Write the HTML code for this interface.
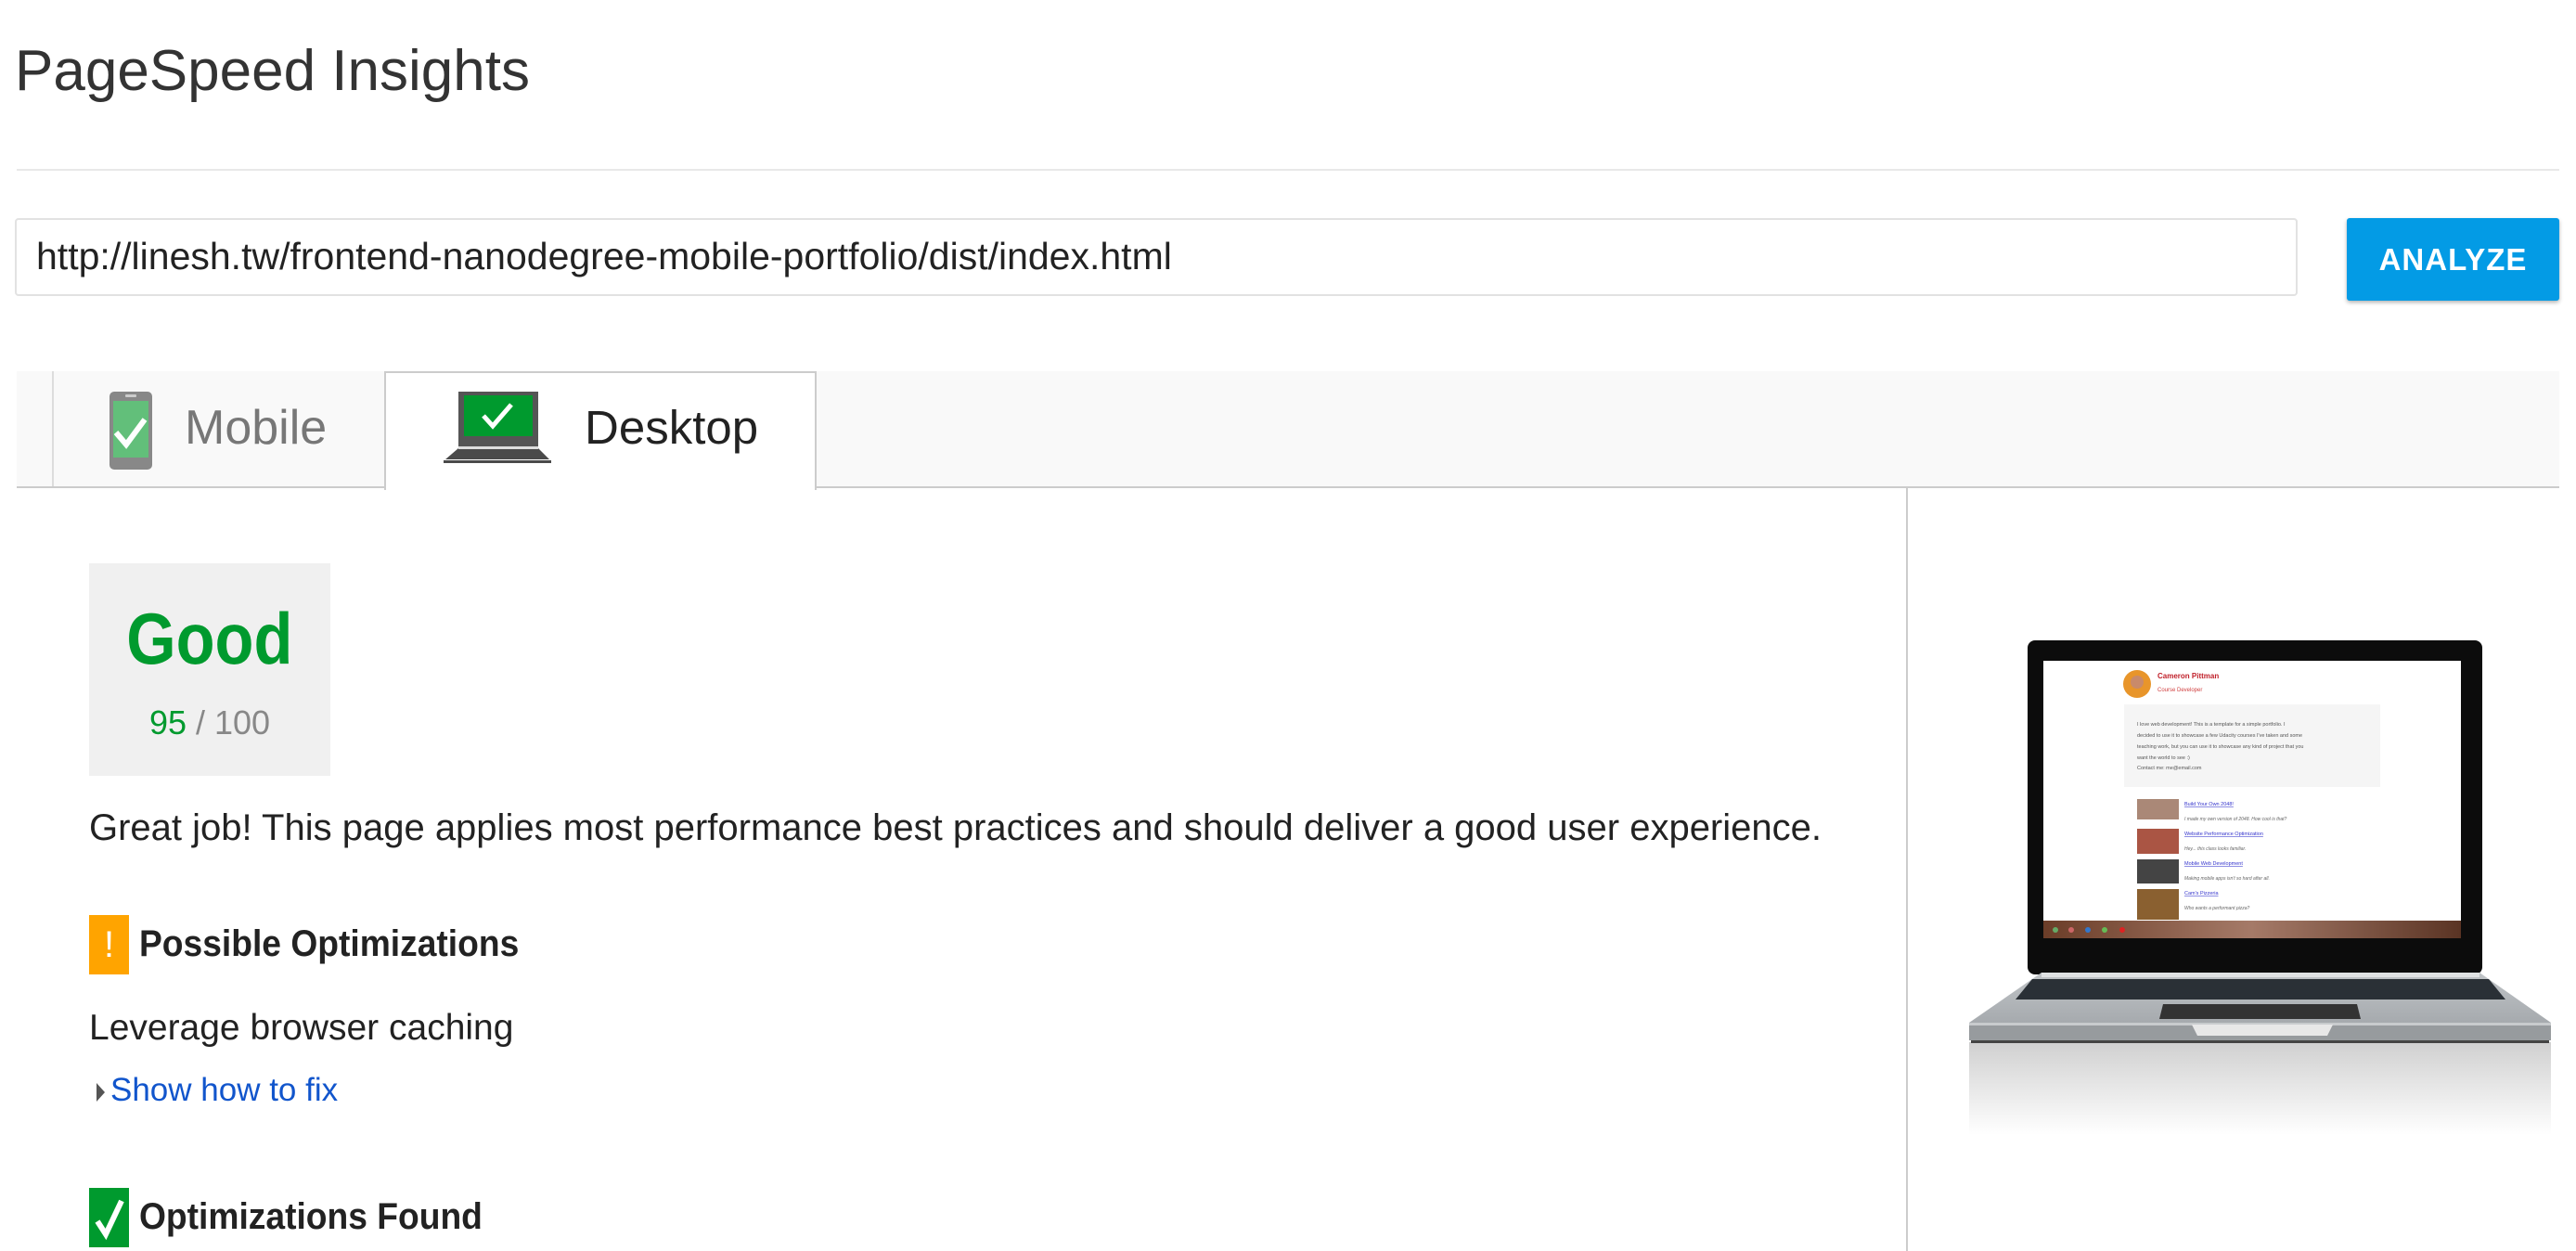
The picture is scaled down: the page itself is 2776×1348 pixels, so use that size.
<!DOCTYPE html>
<html><head><meta charset="utf-8">
<style>
html,body{margin:0;padding:0;background:#fff;}
body{width:2776px;height:1348px;position:relative;overflow:hidden;font-family:"Liberation Sans",Arial,sans-serif;color:#222;}
.a{position:absolute;white-space:nowrap;}
</style></head><body>
<div class="a" style="left:16px;top:37px;font-size:62px;color:#333;line-height:80px;">PageSpeed Insights</div>
<div class="a" style="left:18px;top:182px;width:2740px;height:2px;background:#e8e8e8;"></div>

<div class="a" style="left:16px;top:235px;width:2456px;height:80px;border:2px solid #e2e2e2;border-radius:4px;"></div>
<div class="a" style="left:39px;top:252px;font-size:41px;line-height:48px;color:#222;">http://linesh.tw/frontend-nanodegree-mobile-portfolio/dist/index.html</div>

<div class="a" style="left:2529px;top:235px;width:229px;height:89px;background:#039be5;border-radius:3px;box-shadow:0 2px 4px rgba(0,0,0,.3);color:#fff;font-size:33px;font-weight:bold;line-height:89px;text-align:center;letter-spacing:1px;">ANALYZE</div>

<div class="a" style="left:18px;top:400px;width:2740px;height:124px;background:#f9f9f9;border-bottom:2px solid #ccc;"></div>
<div class="a" style="left:56px;top:400px;width:2px;height:124px;background:#ddd;"></div>
<svg class="a" style="left:116px;top:420px" width="50" height="88" viewBox="0 0 50 88">
<rect x="2" y="2" width="46" height="84" rx="5" fill="#888"/>
<rect x="6" y="12" width="38" height="61" fill="#62bf7a"/>
<rect x="19" y="5" width="12" height="3" rx="1" fill="#ccc"/>
<path d="M9 46 L20 59 L40 32" stroke="#fff" stroke-width="6" fill="none"/>
</svg>
<div class="a" style="left:199px;top:430px;font-size:52px;line-height:62px;color:#777;">Mobile</div>

<div class="a" style="left:414px;top:400px;width:466px;height:128px;background:#fff;border:2px solid #ccc;border-bottom:none;box-sizing:border-box;"></div>
<svg class="a" style="left:478px;top:420px" width="116" height="82" viewBox="0 0 116 82">
<rect x="16" y="2" width="86" height="64" fill="#555"/>
<rect x="22" y="6" width="74" height="44" fill="#009a2e"/>
<path d="M43 28 L53 39 L73 16" stroke="#fff" stroke-width="5" fill="none"/>
<path d="M16 63 L102 63 L114 75 L2 75 Z" fill="#4a4a4a"/>
<rect x="16" y="61" width="86" height="3" fill="#ddd"/>
<rect x="0" y="76" width="116" height="3" fill="#4a4a4a"/>
</svg>
<div class="a" style="left:630px;top:430px;font-size:51px;line-height:62px;color:#222;">Desktop</div>

<div class="a" style="left:2054px;top:526px;width:2px;height:822px;background:#ccc;"></div>

<div class="a" style="left:96px;top:607px;width:260px;height:229px;background:#f0f0f0;"></div>
<div class="a" style="left:96px;top:640px;width:260px;text-align:center;font-size:78px;line-height:96px;font-weight:bold;color:#009a2e;"><span style="display:inline-block;transform:scaleX(0.88);">Good</span></div>
<div class="a" style="left:96px;top:757px;width:260px;text-align:center;font-size:36px;line-height:44px;color:#888;"><span style="color:#009a2e">95</span> / 100</div>

<div class="a" style="left:96px;top:867px;font-size:40px;line-height:50px;color:#222;">Great job! This page applies most performance best practices and should deliver a good user experience.</div>

<div class="a" style="left:96px;top:986px;width:43px;height:64px;background:#ffa400;color:#fff;font-size:40px;line-height:64px;text-align:center;">!</div>
<div class="a" style="left:150px;top:992px;font-size:40px;line-height:50px;font-weight:bold;color:#222;"><span style="display:inline-block;transform:scaleX(0.93);transform-origin:left;">Possible Optimizations</span></div>

<div class="a" style="left:96px;top:1083px;font-size:39px;line-height:50px;color:#222;">Leverage browser caching</div>
<svg class="a" style="left:103px;top:1166px" width="12" height="22"><path d="M1 1 L10 11 L1 21Z" fill="#555"/></svg>
<div class="a" style="left:119px;top:1152px;font-size:35px;line-height:46px;color:#15c;">Show how to fix</div>

<div class="a" style="left:96px;top:1280px;width:43px;height:64px;background:#009a2e;"></div>
<svg class="a" style="left:96px;top:1280px" width="43" height="64"><path d="M9 36 L18 50 L35 14" stroke="#fff" stroke-width="6" fill="none"/></svg>
<div class="a" style="left:150px;top:1286px;font-size:40px;line-height:50px;font-weight:bold;color:#222;"><span style="display:inline-block;transform:scaleX(0.93);transform-origin:left;">Optimizations Found</span></div>

<svg class="a" style="left:2120px;top:680px" width="656" height="620" viewBox="2120 680 656 620" font-family="Liberation Sans, Arial, sans-serif">
<defs>
<linearGradient id="refl" x1="0" y1="0" x2="0" y2="1"><stop offset="0" stop-color="#d0d0d0"/><stop offset="1" stop-color="#fff"/></linearGradient>
<linearGradient id="deck" x1="0" y1="0" x2="0" y2="1"><stop offset="0" stop-color="#c0c4c7"/><stop offset="1" stop-color="#a6aaae"/></linearGradient>
<linearGradient id="tb" x1="0" y1="0" x2="1" y2="0"><stop offset="0" stop-color="#6b3d28"/><stop offset=".5" stop-color="#a57a68"/><stop offset="1" stop-color="#5a3424"/></linearGradient>
</defs>
<rect x="2122" y="1123" width="627" height="100" fill="url(#refl)"/>
<rect x="2185" y="690" width="490" height="360" rx="8" fill="#0c0c0c"/>
<rect x="2202" y="712" width="450" height="280" fill="#fff"/>
<rect x="2202" y="992" width="450" height="19" fill="url(#tb)"/>
<circle cx="2215" cy="1002" r="3" fill="#6a6"/><circle cx="2232" cy="1002" r="3" fill="#c66"/><circle cx="2250" cy="1002" r="3" fill="#37c"/><circle cx="2268" cy="1002" r="3" fill="#6b5"/><circle cx="2287" cy="1002" r="3" fill="#d22"/>
<circle cx="2303" cy="737" r="15" fill="#e8952a"/><circle cx="2303" cy="735" r="7" fill="#c98a6a"/>
<text x="2325" y="731" font-size="8" font-weight="bold" fill="#c0202a">Cameron Pittman</text>
<text x="2325" y="745" font-size="6" fill="#d04040">Course Developer</text>
<rect x="2289" y="759" width="276" height="89" fill="#f5f5f5"/>
<g font-size="5.5" fill="#555">
<text x="2303" y="782">I love web development! This is a template for a simple portfolio. I</text>
<text x="2303" y="794">decided to use it to showcase a few Udacity courses I've taken and some</text>
<text x="2303" y="806">teaching work, but you can use it to showcase any kind of project that you</text>
<text x="2303" y="818">want the world to see :)</text>
<text x="2303" y="829">Contact me: me@email.com</text>
</g>
<rect x="2303" y="861" width="45" height="22" fill="#a87"/>
<rect x="2303" y="893" width="45" height="27" fill="#a54"/>
<rect x="2303" y="926" width="45" height="26" fill="#444"/>
<rect x="2303" y="958" width="45" height="33" fill="#8a6030"/>
<g font-size="5.5" fill="#33c" text-decoration="underline">
<text x="2354" y="868">Build Your Own 2048!</text>
<text x="2354" y="900">Website Performance Optimization</text>
<text x="2354" y="932">Mobile Web Development</text>
<text x="2354" y="964">Cam's Pizzeria</text>
</g>
<g font-size="5" fill="#666" font-style="italic">
<text x="2354" y="884">I made my own version of 2048. How cool is that?</text>
<text x="2354" y="916">Hey... this class looks familiar.</text>
<text x="2354" y="948">Making mobile apps isn't so hard after all.</text>
<text x="2354" y="980">Who wants a performant pizza?</text>
</g>
<path d="M2200 1048 L2672 1048 L2749 1102 L2122 1102 Z" fill="url(#deck)"/>
<rect x="2200" y="1048" width="472" height="5" fill="#e0e2e3"/>
<path d="M2190 1055 L2682 1055 L2700 1077 L2172 1077 Z" fill="#2a3036"/>
<path d="M2331 1082 L2540 1082 L2544 1098 L2327 1098 Z" fill="#333"/>
<path d="M2122 1102 L2749 1102 L2749 1121 L2122 1121 Z" fill="#979b9e"/>
<rect x="2122" y="1102" width="627" height="3" fill="#c8cbcd"/>
<path d="M2362 1104 L2514 1104 L2508 1116 L2368 1116 Z" fill="#e8e8e8"/>
<rect x="2124" y="1121" width="623" height="3" fill="#444"/>
</svg>
</body></html>
